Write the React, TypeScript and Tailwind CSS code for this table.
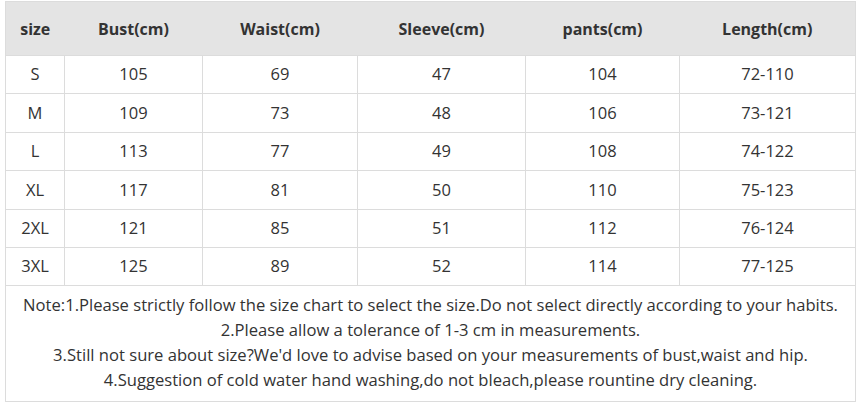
const headers = ['size', 'Bust(cm)', 'Waist(cm)', 'Sleeve(cm)', 'pants(cm)', 'Length(cm)'];

const rows = [
  ['S', '105', '69', '47', '104', '72-110'],
  ['M', '109', '73', '48', '106', '73-121'],
  ['L', '113', '77', '49', '108', '74-122'],
  ['XL', '117', '81', '50', '110', '75-123'],
  ['2XL', '121', '85', '51', '112', '76-124'],
  ['3XL', '125', '89', '52', '114', '77-125'],
];

const colWidths = ['w-[59px]', 'w-[138px]', 'w-[155px]', 'w-[168px]', 'w-[154px]', 'w-[176px]'];

export default function App() {
  return (
    <div className="w-[860px] h-[405px] bg-white pt-px pl-[5px] font-['Open_Sans',sans-serif] text-[#333]">
      <table className="w-[850px] table-fixed border-collapse border border-[#dcdcdc]">
        <colgroup>
          {colWidths.map((w, i) => (
            <col key={i} className={w} />
          ))}
        </colgroup>
        <thead>
          <tr className="h-[54px] bg-[#e4e4e4]">
            {headers.map((h) => (
              <th key={h} className="text-[16px] font-bold text-[#333] text-center">
                {h}
              </th>
            ))}
          </tr>
        </thead>
        <tbody>
          {rows.map((r) => (
            <tr key={r[0]} className="h-[38.4px]">
              {r.map((c, i) => (
                <td key={i} className="border border-[#dcdcdc] text-center text-[16.5px] leading-none">
                  {c}
                </td>
              ))}
            </tr>
          ))}
          <tr>
            <td colSpan={6} className="border border-[#dcdcdc] text-center text-[16.6px] leading-[25px] pt-[6px] pb-[9px]">
              <p>Note:1.Please strictly follow the size chart to select the size.Do not select directly according to your habits.</p>
              <p>2.Please allow a tolerance of 1-3 cm in measurements.</p>
              <p>3.Still not sure about size?We'd love to advise based on your measurements of bust,waist and hip.</p>
              <p>4.Suggestion of cold water hand washing,do not bleach,please rountine dry cleaning.</p>
            </td>
          </tr>
        </tbody>
      </table>
    </div>
  );
}
